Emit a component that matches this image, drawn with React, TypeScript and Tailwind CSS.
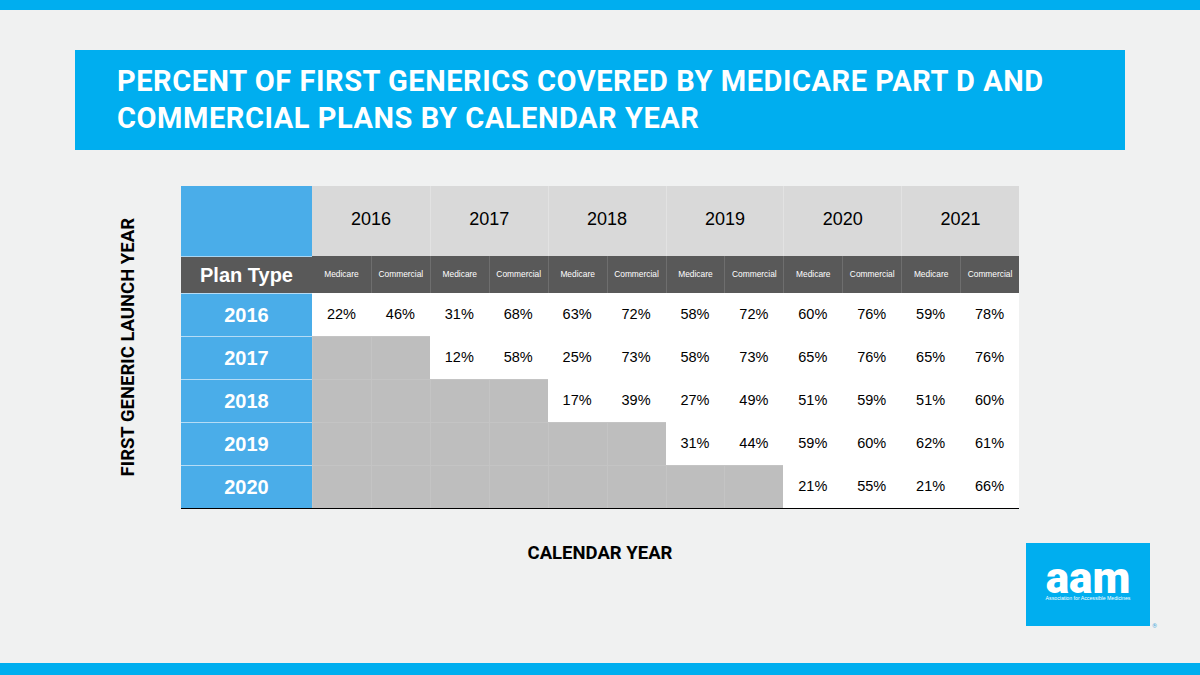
const years = ["2016", "2017", "2018", "2019", "2020", "2021"];

const rows: { year: string; values: (string | null)[] }[] = [
  { year: "2016", values: ["22%", "46%", "31%", "68%", "63%", "72%", "58%", "72%", "60%", "76%", "59%", "78%"] },
  { year: "2017", values: [null, null, "12%", "58%", "25%", "73%", "58%", "73%", "65%", "76%", "65%", "76%"] },
  { year: "2018", values: [null, null, null, null, "17%", "39%", "27%", "49%", "51%", "59%", "51%", "60%"] },
  { year: "2019", values: [null, null, null, null, null, null, "31%", "44%", "59%", "60%", "62%", "61%"] },
  { year: "2020", values: [null, null, null, null, null, null, null, null, "21%", "55%", "21%", "66%"] },
];

const plans = years.flatMap(() => ["Medicare", "Commercial"]);

const CoverageTable = () => (
  <div className="w-[838px] border-b border-black font-['Liberation_Sans',Arial,sans-serif]">
    <div className="grid grid-cols-[131px_repeat(12,minmax(0,1fr))]">
      <div className="h-[70px] bg-[#4aade9]" />
      {years.map((y, i) => (
        <div
          key={y}
          className={`col-span-2 h-[70px] bg-[#d9d9d9] flex items-center justify-center pb-[4px] text-[18px] text-black ${i > 0 ? "border-l border-[#e2e2e2]" : ""}`}
        >
          {y}
        </div>
      ))}

      <div className="h-[37px] bg-[#595959] border-t border-[#a9d6f3] flex items-center justify-center text-white font-bold text-[20px]">
        Plan Type
      </div>
      {plans.map((p, i) => (
        <div
          key={i}
          className={`h-[37px] bg-[#595959] flex items-center justify-center text-white text-[8.4px] ${i > 0 ? "border-l border-[#6e6e6e]" : ""}`}
        >
          {p}
        </div>
      ))}

      {rows.map((row) => (
        <div key={row.year} className="contents">
          <div className="h-[43px] bg-[#4aade9] border-t border-[#b5dcf6] flex items-center justify-center text-white font-bold text-[20px]">
            {row.year}
          </div>
          {row.values.map((v, i) =>
            v === null ? (
              <div key={i} className="h-[43px] bg-[#bebebe] border-t border-l border-[#c4c4c4]" />
            ) : (
              <div key={i} className="h-[43px] bg-white flex items-center justify-center text-[14.5px] text-black">
                {v}
              </div>
            )
          )}
        </div>
      ))}
    </div>
  </div>
);

const Logo = () => (
  <div className="relative w-[124px] h-[83px] bg-[#00aeef] flex flex-col items-center pt-[22px]">
    <span className="font-['Roboto',sans-serif] font-black text-[44px] leading-[26px] text-white">
      aam
    </span>
    <span className="mt-[5px] font-['Liberation_Sans',Arial,sans-serif] text-[5.2px] leading-none text-white">
      Association for Accessible Medicines
    </span>
    <span className="absolute -right-[7px] bottom-[-3px] text-[6px] leading-none text-[#4aa8dc]">®</span>
  </div>
);

export default function App() {
  return (
    <div className="w-[1200px] h-[675px] bg-[#f0f1f1] flex flex-col font-['Roboto',sans-serif]">
      <div className="h-[10px] bg-[#00aeef]" />

      <div className="pt-[40px] flex justify-center">
        <div className="w-[1050px] h-[100px] bg-[#00aeef] pl-[42px] pt-[13px]">
          <h1 className="text-white font-bold text-[29px] leading-[37px] tracking-[0.55px] uppercase">
            Percent of first generics covered by Medicare Part D and
            <br />
            commercial plans by calendar year
          </h1>
        </div>
      </div>

      <div className="mt-[36px] flex items-center pl-[118px]">
        <div className="w-[20px] flex justify-center">
          <span className="[writing-mode:vertical-rl] rotate-180 text-black font-bold text-[18.5px] leading-[20px] whitespace-nowrap">
            FIRST GENERIC LAUNCH YEAR
          </span>
        </div>
        <div className="ml-[43px]">
          <CoverageTable />
        </div>
      </div>

      <div className="flex-1 grid grid-cols-[1fr_auto_1fr] items-start">
        <div />
        <div className="pt-[32px] text-black font-bold text-[18.5px] leading-[24px]">CALENDAR YEAR</div>
        <div className="flex justify-end pr-[50px] pt-[34px]">
          <Logo />
        </div>
      </div>

      <div className="h-[12px] bg-[#00aeef]" />
    </div>
  );
}
